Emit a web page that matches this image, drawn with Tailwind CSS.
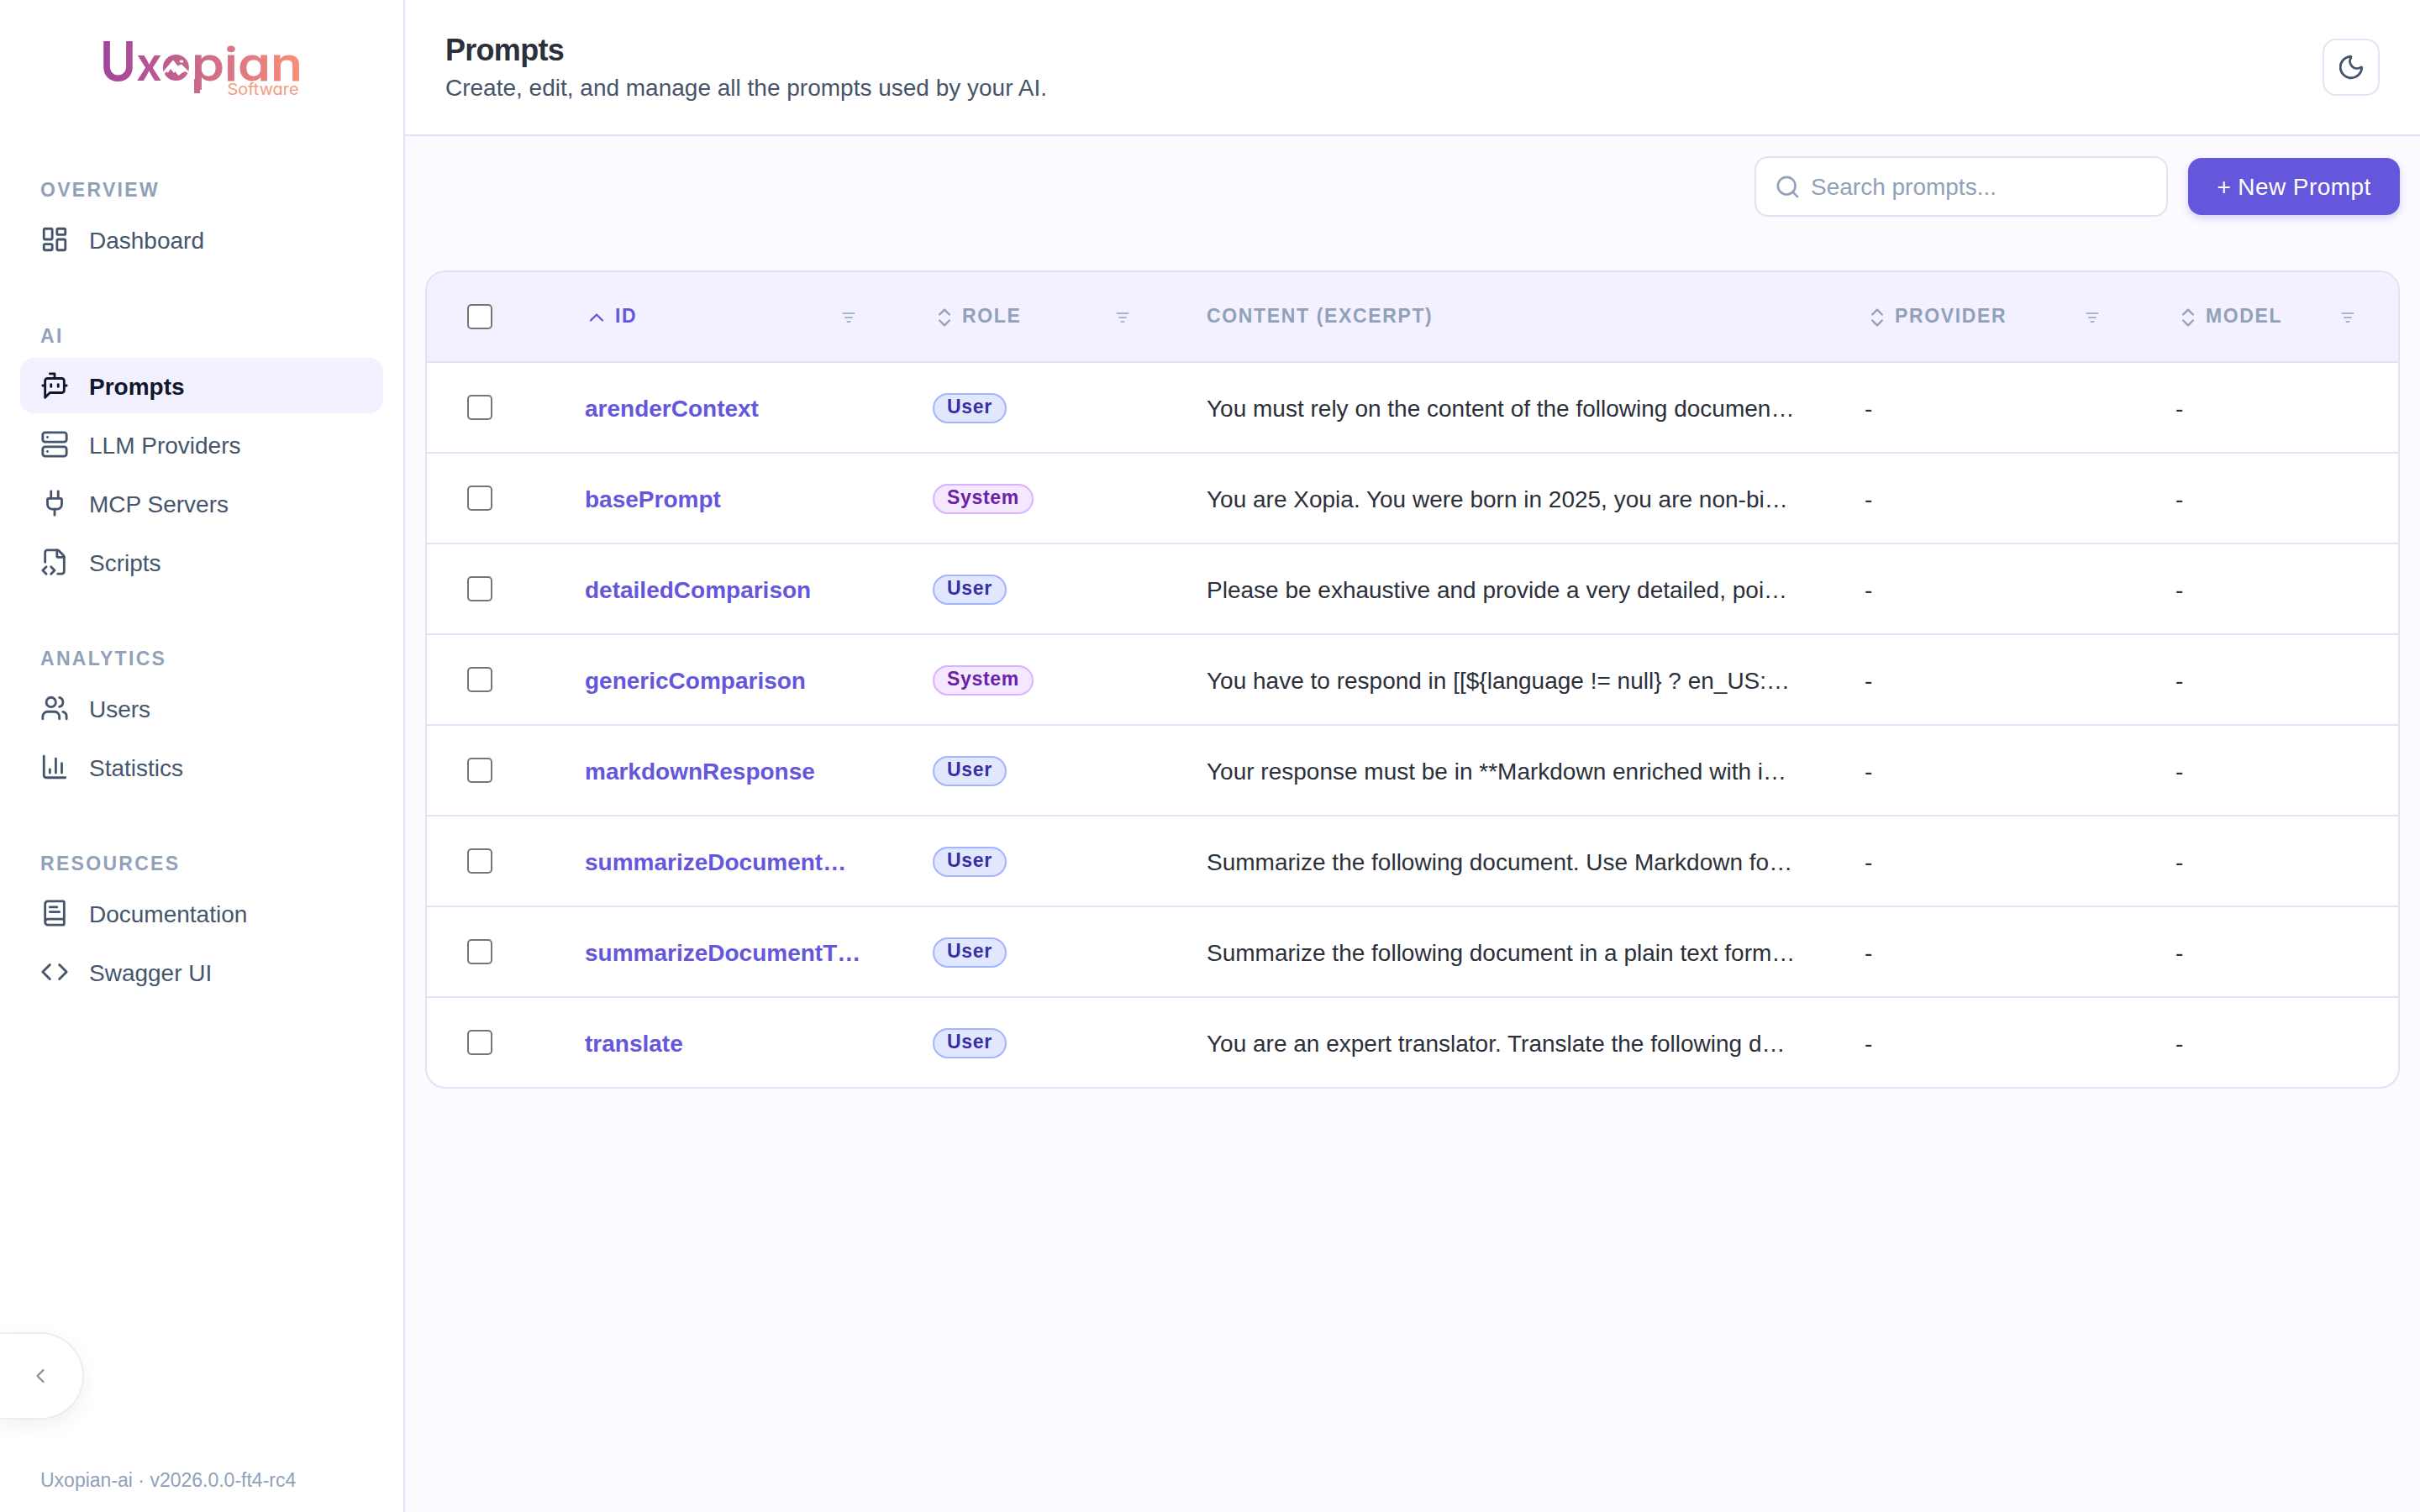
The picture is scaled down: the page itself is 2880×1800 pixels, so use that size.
<!DOCTYPE html>
<html lang="en">
<head>
  <meta charset="UTF-8" />
  <meta name="viewport" content="width=device-width, initial-scale=1.0" />
  <script src="https://cdn.jsdelivr.net/npm/@tailwindcss/browser@4"></script>
  <title>Prompts</title>
</head>
<body class="flex h-[1800px] w-[2880px] overflow-hidden bg-[#fbfaff] font-['Liberation_Sans',Arial,sans-serif] text-[28px] text-[#2b303b]">
  <aside class="relative flex w-[482px] shrink-0 flex-col border-r-2 border-[#e4e1f5] bg-white">
    <svg class="mt-[30px] ml-[100px] h-[100px] w-[280px] shrink-0" viewBox="0 0 280 100" font-family="Inter, sans-serif">
      <defs>
        <linearGradient id="brand" gradientUnits="userSpaceOnUse" x1="22" y1="0" x2="258" y2="0">
          <stop offset="0" stop-color="#a0459b" />
          <stop offset="1" stop-color="#f98f77" />
        </linearGradient>
      </defs>
      <g fill="url(#brand)" font-weight="600" style="font-feature-settings: 'cv11'">
        <text x="19" y="65.5" font-size="65" textLength="43" lengthAdjust="spacingAndGlyphs">U</text>
        <text x="62" y="65.5" font-size="54" textLength="31" lengthAdjust="spacingAndGlyphs">x</text>
        <text x="128" y="65.5" font-size="54" font-weight="500" stroke="url(#brand)" stroke-width="0.8" textLength="132" lengthAdjust="spacingAndGlyphs">pian</text>
        <rect x="131" y="64" width="7" height="17" />
        <circle cx="109.4" cy="50.5" r="15.5" />
      </g>
      <path fill="#fff" d="M94 56l2-3 10-11.5 5.700 7 4.300-2 8 8v2.500l-4-2-3.700 2-4 3-4-5-1.300 2-4-5-3 4.500-2-1-3 3z" />
      <ellipse cx="116" cy="43" rx="2.500" ry="1.600" fill="#fff" />
      <text x="170.500" y="82.500" font-size="18.500" fill="#f69a80" textLength="85" lengthAdjust="spacingAndGlyphs" style="font-feature-settings: 'cv11'">Software</text>
    </svg>

    <nav class="mt-[78px] flex flex-col gap-16 px-6">
      <section>
        <h2 class="mb-2 px-6 text-[23px] leading-9 font-bold tracking-[2.3px] text-slate-400">OVERVIEW</h2>
        <a class="flex h-[66px] items-center gap-6 rounded-2xl px-6 text-slate-600">
          <svg class="size-[34px]" viewBox="0 0 24 24" fill="none" stroke="currentColor" stroke-width="2" stroke-linecap="round" stroke-linejoin="round"><rect width="7" height="9" x="3" y="3" rx="1" /><rect width="7" height="5" x="14" y="3" rx="1" /><rect width="7" height="9" x="14" y="12" rx="1" /><rect width="7" height="5" x="3" y="16" rx="1" /></svg>
          <span class="pt-1">Dashboard</span>
        </a>
      </section>

      <section>
        <h2 class="mb-2 px-6 text-[23px] leading-9 font-bold tracking-[2.3px] text-slate-400">AI</h2>
        <div class="flex flex-col gap-1">
          <a class="flex h-[66px] items-center gap-6 rounded-2xl bg-[#f3f0ff] px-6 font-bold text-slate-900">
            <svg class="size-[34px]" viewBox="0 0 24 24" fill="none" stroke="currentColor" stroke-width="2" stroke-linecap="round" stroke-linejoin="round"><path d="M12 6V2H8" /><path d="m8 18-4 4V8a2 2 0 0 1 2-2h12a2 2 0 0 1 2 2v8a2 2 0 0 1-2 2Z" /><path d="M2 12h2" /><path d="M9 11v2" /><path d="M15 11v2" /><path d="M20 12h2" /></svg>
            <span class="pt-1">Prompts</span>
          </a>
          <a class="flex h-[66px] items-center gap-6 rounded-2xl px-6 text-slate-600">
            <svg class="size-[34px]" viewBox="0 0 24 24" fill="none" stroke="currentColor" stroke-width="2" stroke-linecap="round" stroke-linejoin="round"><rect width="20" height="8" x="2" y="2" rx="2" /><rect width="20" height="8" x="2" y="14" rx="2" /><path d="M6 6h.01" /><path d="M6 18h.01" /></svg>
            <span class="pt-1">LLM Providers</span>
          </a>
          <a class="flex h-[66px] items-center gap-6 rounded-2xl px-6 text-slate-600">
            <svg class="size-[34px]" viewBox="0 0 24 24" fill="none" stroke="currentColor" stroke-width="2" stroke-linecap="round" stroke-linejoin="round"><path d="M12 22v-5" /><path d="M15 8V2" /><path d="M17 8a1 1 0 0 1 1 1v4a4 4 0 0 1-4 4h-4a4 4 0 0 1-4-4V9a1 1 0 0 1 1-1z" /><path d="M9 8V2" /></svg>
            <span class="pt-1">MCP Servers</span>
          </a>
          <a class="flex h-[66px] items-center gap-6 rounded-2xl px-6 text-slate-600">
            <svg class="size-[34px]" viewBox="0 0 24 24" fill="none" stroke="currentColor" stroke-width="2" stroke-linecap="round" stroke-linejoin="round"><path d="M4 12.15V4a2 2 0 0 1 2-2h8a2.4 2.4 0 0 1 1.706.706l3.588 3.588A2.4 2.4 0 0 1 20 8v12a2 2 0 0 1-2 2h-3.35" /><path d="M14 2v5a1 1 0 0 0 1 1h5" /><path d="m5 16-3 3 3 3" /><path d="m9 22 3-3-3-3" /></svg>
            <span class="pt-1">Scripts</span>
          </a>
        </div>
      </section>

      <section>
        <h2 class="mb-2 px-6 text-[23px] leading-9 font-bold tracking-[2.3px] text-slate-400">ANALYTICS</h2>
        <div class="flex flex-col gap-1">
          <a class="flex h-[66px] items-center gap-6 rounded-2xl px-6 text-slate-600">
            <svg class="size-[34px]" viewBox="0 0 24 24" fill="none" stroke="currentColor" stroke-width="2" stroke-linecap="round" stroke-linejoin="round"><path d="M16 21v-2a4 4 0 0 0-4-4H6a4 4 0 0 0-4 4v2" /><path d="M16 3.128a4 4 0 0 1 0 7.744" /><path d="M22 21v-2a4 4 0 0 0-3-3.87" /><circle cx="9" cy="7" r="4" /></svg>
            <span class="pt-1">Users</span>
          </a>
          <a class="flex h-[66px] items-center gap-6 rounded-2xl px-6 text-slate-600">
            <svg class="size-[34px]" viewBox="0 0 24 24" fill="none" stroke="currentColor" stroke-width="2" stroke-linecap="round" stroke-linejoin="round"><path d="M3 3v16a2 2 0 0 0 2 2h16" /><path d="M18 17V9" /><path d="M13 17V5" /><path d="M8 17v-3" /></svg>
            <span class="pt-1">Statistics</span>
          </a>
        </div>
      </section>

      <section>
        <h2 class="mb-2 px-6 text-[23px] leading-9 font-bold tracking-[2.3px] text-slate-400">RESOURCES</h2>
        <div class="flex flex-col gap-1">
          <a class="flex h-[66px] items-center gap-6 rounded-2xl px-6 text-slate-600">
            <svg class="size-[34px]" viewBox="0 0 24 24" fill="none" stroke="currentColor" stroke-width="2" stroke-linecap="round" stroke-linejoin="round"><path d="M4 19.5v-15A2.5 2.5 0 0 1 6.5 2H19a1 1 0 0 1 1 1v18a1 1 0 0 1-1 1H6.5a1 1 0 0 1 0-5H20" /><path d="M8 11h8" /><path d="M8 7h6" /></svg>
            <span class="pt-1">Documentation</span>
          </a>
          <a class="flex h-[66px] items-center gap-6 rounded-2xl px-6 text-slate-600">
            <svg class="size-[34px]" viewBox="0 0 24 24" fill="none" stroke="currentColor" stroke-width="2" stroke-linecap="round" stroke-linejoin="round"><path d="m16 18 6-6-6-6" /><path d="m8 6-6 6 6 6" /></svg>
            <span class="pt-1">Swagger UI</span>
          </a>
        </div>
      </section>
    </nav>

    <p class="mt-auto mb-5 px-12 text-[23px] leading-9 text-slate-400">Uxopian-ai · v2026.0.0-ft4-rc4</p>

    <!-- collapse tab, hangs off the left edge -->
    <button class="absolute top-[1586px] left-0 flex h-[104px] w-[100px] items-center rounded-r-full border-2 border-l-0 border-[#eeebfa] bg-white pl-[34px] text-slate-600/65 shadow-[0_8px_24px_rgba(0,0,0,0.06)]">
      <svg class="size-7" viewBox="0 0 24 24" fill="none" stroke="currentColor" stroke-width="2" stroke-linecap="round" stroke-linejoin="round"><path d="m15 18-6-6 6-6" /></svg>
    </button>
  </aside>

  <main class="flex min-w-0 flex-1 flex-col">
    <header class="flex h-[162px] items-start justify-between border-b-2 border-[#e4e1f5] bg-white px-12">
      <div class="pt-10">
        <h1 class="text-4xl leading-10 font-bold tracking-[-0.72px]">Prompts</h1>
        <p class="mt-1 leading-[42px] text-slate-600">Create, edit, and manage all the prompts used by your AI.</p>
      </div>
      <button class="mt-[46px] flex size-[68px] items-center justify-center rounded-2xl border-2 border-[#e4e1f5] text-slate-600">
        <svg class="size-[34px]" viewBox="0 0 24 24" fill="none" stroke="currentColor" stroke-width="2" stroke-linecap="round" stroke-linejoin="round"><path d="M20.985 12.486a9 9 0 1 1-9.473-9.472c.405-.022.617.46.402.803a6 6 0 0 0 8.268 8.268c.344-.215.825-.004.803.401" /></svg>
      </button>
    </header>

    <div class="flex flex-col gap-16 p-6">
      <div class="flex items-center justify-end gap-6">
        <label class="flex h-[72px] w-[492px] items-center gap-3 rounded-2xl border-2 border-[#e4e1f5] bg-white px-[22px] text-slate-400">
          <svg class="size-[31px] shrink-0" viewBox="0 0 24 24" fill="none" stroke="currentColor" stroke-width="2" stroke-linecap="round" stroke-linejoin="round"><circle cx="11" cy="11" r="8" /><path d="m21 21-4.34-4.34" /></svg>
          <input class="w-full pt-0.5 outline-none placeholder:text-slate-400" type="text" placeholder="Search prompts..." />
        </label>
        <button class="h-[68px] w-[252px] rounded-2xl bg-[#6557dc] pt-0.5 tracking-[0.42px] text-white shadow-[0_4px_8px_rgba(101,87,220,0.25)]">+ New Prompt</button>
      </div>

      <div class="overflow-hidden rounded-3xl border-2 border-[#e4e1f5] bg-white">
        <div class="grid h-[108px] grid-cols-[140px_414px_326px_783px_370px_1fr] items-center border-b-2 border-[#e4e1f5] bg-[#f3f0ff] text-[23px] font-bold tracking-[1.64px] text-slate-400">
          <div class="pl-12"><span class="block size-[30px] rounded-[5px] border-2 border-[#767676] bg-white"></span></div>
          <div class="flex items-center gap-2 pr-[42px] pl-12 text-[#6557dc]">
            <svg class="mt-0.5 size-7" viewBox="0 0 24 24" fill="none" stroke="currentColor" stroke-width="2" stroke-linecap="round" stroke-linejoin="round"><path d="m18 15-6-6-6 6" /></svg>
            <span class="pb-0.5">ID</span>
            <svg class="mt-0.5 ml-auto size-5 text-slate-400" viewBox="0 0 24 24" fill="none" stroke="currentColor" stroke-width="2" stroke-linecap="round"><path d="M4 6h16M7 12h10M10 18h4" /></svg>
          </div>
          <div class="flex items-center gap-[7px] pr-[42px] pl-12">
            <svg class="mt-0.5 size-7" viewBox="0 0 24 24" fill="none" stroke="currentColor" stroke-width="2" stroke-linecap="round" stroke-linejoin="round"><path d="m7 15 5 5 5-5" /><path d="m7 9 5-5 5 5" /></svg>
            <span class="pb-0.5">ROLE</span>
            <svg class="mt-0.5 ml-auto size-5" viewBox="0 0 24 24" fill="none" stroke="currentColor" stroke-width="2" stroke-linecap="round"><path d="M4 6h16M7 12h10M10 18h4" /></svg>
          </div>
          <div class="pb-0.5 pl-12">CONTENT (EXCERPT)</div>
          <div class="flex items-center gap-[7px] pr-[41px] pl-[49px]">
            <svg class="mt-0.5 size-7" viewBox="0 0 24 24" fill="none" stroke="currentColor" stroke-width="2" stroke-linecap="round" stroke-linejoin="round"><path d="m7 15 5 5 5-5" /><path d="m7 9 5-5 5 5" /></svg>
            <span class="pb-0.5">PROVIDER</span>
            <svg class="mt-0.5 ml-auto size-5" viewBox="0 0 24 24" fill="none" stroke="currentColor" stroke-width="2" stroke-linecap="round"><path d="M4 6h16M7 12h10M10 18h4" /></svg>
          </div>
          <div class="flex items-center gap-[7px] pr-[50px] pl-[49px]">
            <svg class="mt-0.5 size-7" viewBox="0 0 24 24" fill="none" stroke="currentColor" stroke-width="2" stroke-linecap="round" stroke-linejoin="round"><path d="m7 15 5 5 5-5" /><path d="m7 9 5-5 5 5" /></svg>
            <span class="pb-0.5">MODEL</span>
            <svg class="mt-0.5 ml-auto size-5" viewBox="0 0 24 24" fill="none" stroke="currentColor" stroke-width="2" stroke-linecap="round"><path d="M4 6h16M7 12h10M10 18h4" /></svg>
          </div>
        </div>
        <div class="divide-y-2 divide-[#e4e1f5]" id="rows"></div>
      </div>
    </div>
  </main>

  <script>
    const prompts = [
      { id: "arenderContext", role: "User", content: "You must rely on the content of the following documen…" },
      { id: "basePrompt", role: "System", content: "You are Xopia. You were born in 2025, you are non-bi…" },
      { id: "detailedComparison", role: "User", content: "Please be exhaustive and provide a very detailed, poi…" },
      { id: "genericComparison", role: "System", content: "You have to respond in [[${language != null} ? en_US:…" },
      { id: "markdownResponse", role: "User", content: "Your response must be in **Markdown enriched with i…" },
      { id: "summarizeDocument…", role: "User", content: "Summarize the following document. Use Markdown fo…" },
      { id: "summarizeDocumentT…", role: "User", content: "Summarize the following document in a plain text form…" },
      { id: "translate", role: "User", content: "You are an expert translator. Translate the following d…" },
    ];

    const badges = {
      User: "border-[#a3b3ff] bg-[#e0e7ff] text-[#3730a3]",
      System: "border-[#dab2ff] bg-[#f3e8ff] text-[#6b21a8]",
    };

    document.querySelector("#rows").innerHTML = prompts
      .map(
        (prompt) => `
        <div class="grid grid-cols-[140px_414px_326px_783px_370px_1fr] items-center whitespace-nowrap">
          <div class="flex h-[106px] items-center pl-12"><span class="block size-[30px] rounded-[5px] border-2 border-[#767676] bg-white"></span></div>
          <div class="pt-1 pl-12 font-bold text-[#6557dc]">${prompt.id}</div>
          <div class="flex pt-0.5 pl-12"><span class="h-9 rounded-full border-2 px-[15px] text-[23px] leading-[28px] font-bold tracking-[0.69px] ${badges[prompt.role]}">${prompt.role}</span></div>
          <div class="pt-1 pl-12">${prompt.content}</div>
          <div class="pt-1 pl-12">-</div>
          <div class="pt-1 pl-12">-</div>
        </div>`
      )
      .join("");
  </script>
</body>
</html>
